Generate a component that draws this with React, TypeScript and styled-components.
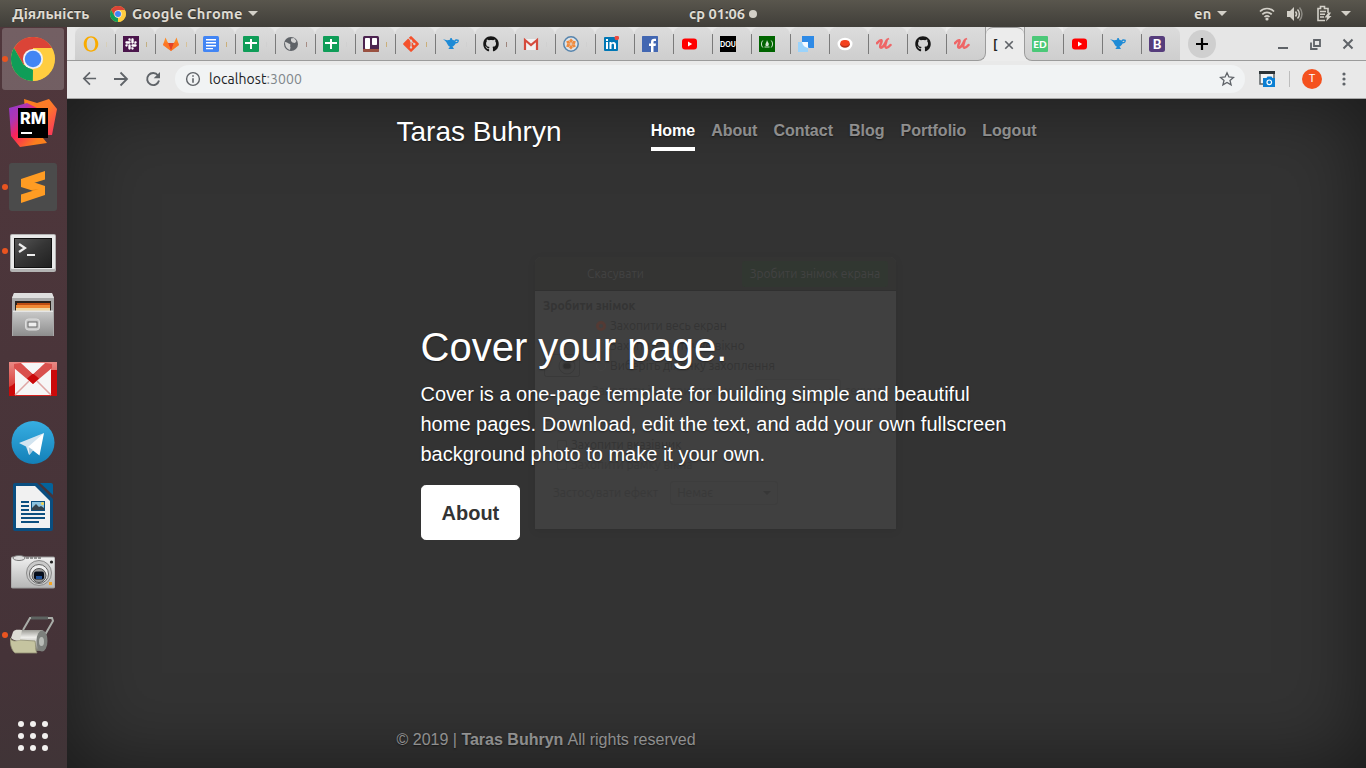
import React from "react";
import styled, { createGlobalStyle } from "styled-components";
import { FaGithub, FaSlack, FaGitAlt } from "react-icons/fa";

const uiFont = `"Ubuntu", "Noto Sans", "Open Sans", sans-serif`;
const pageFont = `"Liberation Sans", Arial, sans-serif`;

const GlobalStyle = createGlobalStyle`
  *, *::before, *::after { box-sizing: border-box; }
  body { margin: 0; overflow: hidden; background: #333; }
  h1, h3, p { margin: 0; }
  svg { display: block; flex: none; }
`;

const Desktop = styled.div`
  width: 1366px;
  height: 768px;
  display: grid;
  grid-template-columns: 67px 1fr;
  grid-template-rows: 27px 1fr;
  overflow: hidden;
`;

/* ---------- top panel ---------- */

const Panel = styled.header`
  grid-column: 1 / 3;
  display: grid;
  grid-template-columns: 689px 505px 1fr;
  background: linear-gradient(#59564d, #403e39);
  color: #dfdbd2;
  font: 700 14.67px/27px ${uiFont};
  text-shadow: 0 -1px 0 rgba(0, 0, 0, 0.45);
`;
const PanelGroup = styled.div<{ $pad?: number }>`
  display: flex;
  align-items: center;
  padding-left: ${(p) => p.$pad ?? 0}px;
`;
const PanelLabel = styled.span<{ $w: number; $ls?: number; $ml?: number }>`
  width: ${(p) => p.$w}px;
  margin-left: ${(p) => p.$ml ?? 0}px;
  letter-spacing: ${(p) => p.$ls ?? 0}px;
  white-space: nowrap;
`;
const Caret = styled.i<{ $ml?: number }>`
  margin-left: ${(p) => p.$ml ?? 0}px;
  border: 5px solid transparent;
  border-top-color: #d3d0c8;
  border-bottom: 0;
`;
const StatusDot = styled.i`
  width: 8px;
  height: 8px;
  margin-left: 4px;
  border-radius: 50%;
  background: #d3d0c8;
`;
const StatusIcon = styled.span<{ $ml: number }>`
  margin-left: ${(p) => p.$ml}px;
`;

/* ---------- dock ---------- */

const Dock = styled.nav`
  display: flex;
  flex-direction: column;
  align-items: center;
  justify-content: space-between;
  padding: 1px 3px 17px 2px;
  background: linear-gradient(#50373c, #4a353a 45%, #453338 85%, #403437);
`;
const DockApps = styled.div`
  display: grid;
  gap: 2px;
`;
const DockItem = styled.div<{ $active?: boolean; $running?: boolean; $drop?: number }>`
  position: relative;
  width: 62px;
  height: 62px;
  display: grid;
  place-items: center;
  padding-top: ${(p) => p.$drop ?? 0}px;
  border-radius: 3px;
  background: ${(p) => (p.$active ? "rgba(255,255,255,.2)" : "transparent")};
  &::before {
    content: "";
    display: ${(p) => (p.$running ? "block" : "none")};
    position: absolute;
    left: 0;
    top: 28px;
    width: 6px;
    height: 6px;
    border-radius: 50%;
    background: #e95420;
  }
`;
const AppGrid = styled.div`
  display: grid;
  grid-template-columns: repeat(3, 6px);
  gap: 6px;
  i {
    width: 6px;
    height: 6px;
    border-radius: 50%;
    background: #f2f0ee;
  }
`;

/* ---------- browser chrome ---------- */

const Browser = styled.main`
  display: grid;
  grid-template-rows: 34px 38px 1fr;
  min-width: 0;
`;
const TabStrip = styled.div`
  display: flex;
  background: linear-gradient(to top, #9b9b9b 1px, #e6e6e6 1px);
`;
const StripLead = styled.div`
  width: 8px;
  height: 33px;
  border-bottom-right-radius: 6px;
  background: #e9e9e9;
`;
const TabBox = styled.div<{ $w: number; $divider?: boolean }>`
  width: ${(p) => p.$w}px;
  height: 33px;
  display: flex;
  align-items: center;
  padding: 1px 0 0 8px;
  gap: 7px;
  border-radius: 8px 8px 0 0;
  background:
    linear-gradient(#7a7a7a, #7a7a7a) left 0 top 7px / ${(p) => (p.$divider ? 1 : 0)}px 20px no-repeat,
    linear-gradient(#dcdcdc, #cecece);
`;
/* The tabs on either side of the active one curve into its foot. */
const FootCorner = styled.div`
  height: 34px;
  background: #ececec;
`;
const TabBeforeActive = styled(TabBox)`
  height: 34px;
  border: solid #9b9b9b;
  border-width: 0 1px 1px 0;
  border-radius: 8px 0 8px 0;
`;
const TabAfterActive = styled(TabBox)`
  height: 34px;
  padding-left: 7px;
  border: solid #9b9b9b;
  border-width: 0 0 1px 1px;
  border-radius: 0 8px 0 8px;
`;
const TitleSliver = styled.i<{ $color: string }>`
  width: 1px;
  height: 5px;
  background: ${(p) => p.$color};
  opacity: 0.5;
`;
const ActiveTab = styled.div`
  width: 38px;
  height: 34px;
  display: flex;
  align-items: center;
  gap: 5px;
  padding-left: 7px;
  border-top: 1px solid #9b9b9b;
  border-radius: 7px 7px 0 0;
  background: #ececec;
  color: #222;
  font: 700 12px/16px ${uiFont};
  span { width: 5px; overflow: hidden; }
`;
const NewTab = styled.button`
  width: 28px;
  height: 28px;
  margin: 3px 0 0 8px;
  padding: 0;
  display: grid;
  place-items: center;
  border: 0;
  border-radius: 50%;
  background: #cfcfcf;
`;
const WindowControls = styled.div`
  display: flex;
  align-items: center;
  gap: 19px;
  margin-left: auto;
  padding: 0 10px 0 0;
`;
const Toolbar = styled.div`
  display: flex;
  align-items: center;
  padding: 0 14px 1px 15px;
  background: #e9e9e9;
  border-bottom: 1px solid #a7a7a7;
`;
const NavButtons = styled.div`
  display: flex;
  gap: 16px;
`;
const Omnibox = styled.div`
  width: 1070px;
  height: 28px;
  display: flex;
  align-items: center;
  margin-left: 14px;
  margin-right: 14px;
  padding: 0 10px;
  border-radius: 14px;
  background: #f1f3f4;
  color: #202124;
  font: 14px/28px ${uiFont};
`;
const Url = styled.span`
  flex: 1;
  margin-left: 8px;
  letter-spacing: 0.06px;
  em { font-style: normal; color: #80868b; }
`;
const ToolbarDivider = styled.i`
  width: 1px;
  height: 16px;
  margin: 0 12px 0 13px;
  background: #bdbdbd;
`;
const Avatar = styled.span`
  width: 20px;
  height: 20px;
  margin-right: 19px;
  border-radius: 50%;
  background: #f4511e;
  color: #fff;
  font: 11px/20px Roboto, sans-serif;
  text-align: center;
`;

/* ---------- page ---------- */

const Page = styled.section`
  position: relative;
  display: flex;
  justify-content: center;
  background: #333;
  box-shadow: inset 0 0 80px rgba(0, 0, 0, 0.5);
  color: #fff;
  font: 16px/1.5 ${pageFont};
  text-shadow: 0 0.8px 1.6px rgba(0, 0, 0, 0.5);
`;
const Cover = styled.div`
  position: relative;
  width: 672px;
  padding: 16px;
  display: flex;
  flex-direction: column;
  justify-content: space-between;
`;
const Masthead = styled.div`
  display: flex;
  justify-content: space-between;
  align-items: flex-start;
`;
const Brand = styled.h3`
  font-size: 28px;
  font-weight: 400;
  line-height: 33.6px;
`;
const SiteNav = styled.nav`
  display: flex;
  gap: 16px;
`;
const SiteLink = styled.a<{ $active?: boolean }>`
  padding: 4px 0;
  font-weight: 700;
  color: ${(p) => (p.$active ? "#fff" : "rgba(255,255,255,.5)")};
  border-bottom: 4px solid ${(p) => (p.$active ? "#fff" : "transparent")};
`;
const Hero = styled.div`
  padding: 0 24px;
  margin-bottom: 17px;
`;
const HeroTitle = styled.h1`
  margin-bottom: 8px;
  font-size: 40px;
  font-weight: 400;
  line-height: 48px;
`;
const Lead = styled.p`
  margin-bottom: 16px;
  font-size: 20px;
  line-height: 30px;
`;
const HeroButton = styled.a`
  display: block;
  width: max-content;
  padding: 12px 20px 11px;
  border: 1px solid #fff;
  border-radius: 4.8px;
  background: #fff;
  color: #333;
  font-size: 20px;
  font-weight: 700;
  line-height: 30px;
  text-shadow: none;
`;
const SiteFooter = styled.footer`
  color: rgba(255, 255, 255, 0.5);
  b { margin-right: 0.6px; }
`;

/* ---------- fading screenshot dialog ---------- */

const Dialog = styled.aside`
  position: absolute;
  left: 468px;
  top: 158px;
  width: 361px;
  height: 272px;
  border-radius: 6px 6px 0 0;
  background: #404040;
  box-shadow: 0 2px 8px rgba(0, 0, 0, 0.08);
  color: #343434;
  font: 12.1px/20px ${uiFont};
  text-shadow: none;
  white-space: nowrap;
`;
const DialogBar = styled.div`
  height: 34px;
  display: grid;
  grid-template-columns: 145px 146px;
  justify-content: space-between;
  align-items: center;
  padding: 0 8px;
  border-bottom: 1px solid #303030;
  border-radius: 6px 6px 0 0;
  background: #343433;
  color: #424242;
  text-align: center;
`;
const DialogButton = styled.span<{ $primary?: boolean }>`
  line-height: 26px;
  border-radius: 3px;
  background: ${(p) => (p.$primary ? "#313731" : "transparent")};
`;
const DialogRow = styled.div<{ $pad: number; $mt?: number; $bold?: boolean; $faint?: boolean }>`
  display: flex;
  align-items: center;
  gap: 4px;
  height: 20px;
  margin-top: ${(p) => p.$mt ?? 0}px;
  padding-left: ${(p) => p.$pad}px;
  font-weight: ${(p) => (p.$bold ? 700 : 400)};
  opacity: ${(p) => (p.$faint ? 0.55 : 1)};
`;
const CameraSlot = styled.span`
  width: 48px;
  margin-left: -52px;
  height: 24px;
`;
const Radio = styled.i<{ $on?: boolean }>`
  width: 10px;
  height: 10px;
  border-radius: 50%;
  border: ${(p) => (p.$on ? "3px solid #533a34" : "1px solid #444")};
`;
const Check = styled.i`
  width: 10px;
  height: 10px;
  border: 1px solid #3b3b3b;
  border-radius: 2px;
`;
const Field = styled.span<{ $w: number; $ml?: number }>`
  width: ${(p) => p.$w}px;
  height: 24px;
  display: flex;
  align-items: center;
  justify-content: space-between;
  margin-left: ${(p) => p.$ml ?? 8}px;
  padding: 0 6px;
  border: 1px solid #3b3b3b;
  border-radius: 3px;
`;
const FieldCaret = styled(Caret)`
  border-width: 4px;
  border-bottom: 0;
  border-top-color: #303030;
`;

/* ---------- icons ---------- */

const ChromeLogo = ({ size }: { size: number }) => (
  <svg width={size} height={size} viewBox="0 0 48 48">
    <circle cx="24" cy="24" r="24" fill="#ffcd40" />
    <path d="M24 24 13.6 30 3.2 12A24 24 0 0 1 44.8 12H24z" fill="#db4437" />
    <path d="M3.2 12 13.6 30l10.4 6-.2 12A24 24 0 0 1 3.2 12z" fill="#0f9d58" />
    <path d="M34.4 30 23.8 48A24 24 0 0 0 44.8 13H24z" fill="#ffcd40" />
    <circle cx="24" cy="24" r="11" fill="#f1f1f1" />
    <circle cx="24" cy="24" r="9" fill="#4285f4" />
  </svg>
);

const Fav = ({ children }: { children: React.ReactNode }) => (
  <svg width="16" height="16" viewBox="0 0 16 16">{children}</svg>
);
const SheetsFav = () => (
  <Fav><rect width="16" height="16" rx="1" fill="#0f9d58" /><path d="M7 3h2v3h5v2H9v5H7V8H2V6h5z" fill="#fff" /></Fav>
);
const LampFav = () => (
  <Fav>
    <path d="M0 3.500c2 0 2.500.8 4.500.7L7 3.700 7.400 2h1.200l.8 1.700 2.100.8c.8-1.600 2.300-1.500 4.300-.8.400 2.400-.9 3.700-3.200 3.700-1 1.800-2 2.700-3.100 3.200L11 13H5.300l1.700-2.300C4 9.700 4.500 5.400 0 3.500z" fill="#1e8bd6" />
    <path d="M12.300 5.800c.5-1 1.300-1.200 2.200-.8 0 .9-.9 1.300-2.200.8z" fill="#d3d3d3" />
  </Fav>
);
const YoutubeFav = () => (
  <Fav><rect x="1" y="2.500" width="15" height="11" rx="3" fill="#f00" /><path d="m7 5.500 4.200 2.500L7 10.500z" fill="#fff" /></Fav>
);
const UdemyFav = () => (
  <Fav>
    <path d="M1 7.200C2.500 5.500 4.200 3.800 5.300 4.200 7 5 3 9.500 4.400 11.300 6.200 13 9 8 10.600 4.500M10.600 4.500C9.500 8 8.500 11 10 11.700s3-1 4.500-2.700" fill="none" stroke="#ee6667" strokeWidth="2.500" strokeLinecap="round" />
    <path d="M10.500 3.800 13 2.500" stroke="#ee6667" strokeWidth="1.600" />
  </Fav>
);
const TextFav = ({ bg, label, size = 10, r = 0, y = 11.5 }: { bg: string; label: string; size?: number; r?: number; y?: number }) => (
  <Fav>
    <rect width="16" height="16" rx={r} fill={bg} />
    <text x="8" y={y} fill="#fff" fontFamily="Lato, sans-serif" fontWeight="900" fontSize={size} textAnchor="middle">{label}</text>
  </Fav>
);

const favicons: { icon: React.ReactNode; w: number; sliver?: string }[] = [
  { w: 40, icon: <Fav><path fillRule="evenodd" d="M8 .3c4.100 0 7.300 3.300 7.300 7.700S12.100 15.700 8 15.700.7 12.400.7 8 3.900.3 8 .3zm0 1.200C5.300 1.500 3.700 4.300 3.700 8s1.600 6.500 4.300 6.500 4.300-2.800 4.300-6.500S10.700 1.500 8 1.500z" fill="#f9ab00" /></Fav>, sliver: "#d8c9a0" },
  { w: 40, icon: <Fav><rect width="16" height="16" fill="#4a154b" /><g transform="translate(1.5 1.500)"><FaSlack size={13} color="#fff" /></g></Fav>, sliver: "#b08a30" },
  { w: 40, icon: <Fav><path d="M8 15 0 9 2.500 1.500 5 7h6l2.500-5.500L16 9z" fill="#fc8a26" /><path d="M8 15 5 7h6z" fill="#e24329" /><path d="M0 9l1-2.500h4L8 15z" fill="#fc6d26" opacity=".7" /><path d="m16 9-1-2.500h-4L8 15z" fill="#fc6d26" opacity=".7" /></Fav>, sliver: "#d8b060" },
  { w: 40, icon: <Fav><rect width="16" height="16" rx="1.500" fill="#4285f4" /><path d="M3 3h10v1.500H3zm0 3h10v1.500H3zm0 3h10v1.500H3zm0 3h7v1.300H3z" fill="#fff" /></Fav>, sliver: "#c08a20" },
  { w: 40, icon: <SheetsFav />, sliver: "#ccc" },
  { w: 40, icon: <Fav><circle cx="8" cy="8" r="7" fill="#5f6368" /><path d="M2 6c2 0 3 1.500 5 2 1 1-.5 2 .5 3.500L7 14C4 13 2 11 2 6zM8 2.500 11 2l2.500 3L12 7 9.500 6.500 8 5z" fill="#d3d3d3" /></Fav>, sliver: "#743" },
  { w: 40, icon: <SheetsFav />, sliver: "#ccc" },
  { w: 40, icon: <Fav><rect width="16" height="16" rx="1.500" fill="#4c2450" /><path d="M0 13h16v1.500a1.500 1.500 0 0 1-1.500 1.500h-13A1.500 1.500 0 0 1 0 14.500z" fill="#9a5140" /><rect x="2" y="2" width="5" height="11" rx=".7" fill="#fff" /><rect x="9" y="2" width="5" height="7" rx=".7" fill="#fff" /></Fav>, sliver: "#c08a20" },
  { w: 40, icon: <FaGitAlt size={18} color="#f4512c" style={{ margin: "0 -1px" }} />, sliver: "#c08a20" },
  { w: 40, icon: <LampFav />, sliver: "#ccc" },
  { w: 40, icon: <FaGithub size={16} color="#161616" />, sliver: "#632" },
  { w: 40, icon: <Fav><path d="M1 3h14v11H1z" fill="#f1f1f1" /><path d="M2 14V4l6 5 6-5v10" fill="none" stroke="#d54b3d" strokeWidth="2.200" /></Fav>, sliver: "#ccc" },
  { w: 40, icon: <Fav><circle cx="8" cy="8" r="7.200" fill="#dfe3e6" stroke="#5684ad" strokeWidth="1.500" />{[0, 60, 120, 180, 240, 300].map((a) => <path key={a} d="M8 7.500 6.200 4.500 8 2.500l2 2.100z" fill="#f08a3c" transform={`rotate(${a} 8 8)`} />)}</Fav>, sliver: "#ccc" },
  { w: 39, icon: <Fav><rect x="1" y="1" width="14" height="14" rx="1" fill="#0077b5" /><path d="M3 6h2v7H3zM3 3h2v2H3zm3.500 3h2v1c1.300-1.700 4.500-1.400 4.500 1.700V13h-2V9c0-1.800-2.500-1.500-2.500 0v4h-2z" fill="#fff" /><circle cx="13.800" cy="2" r="2.300" fill="#ee4b3f" /></Fav> },
  { w: 39, icon: <Fav><rect width="16" height="16" rx=".6" fill="#4267b2" /><path d="M9 16v-6H7V7.500h2V6c0-2.300 1.300-3.300 3.200-3.300H14V5h-1.200C11.700 5 11.500 5.500 11.500 6.300v1.200H14l-.4 2.500h-2.100v6z" fill="#fff" /></Fav> },
  { w: 39, icon: <YoutubeFav /> },
  { w: 39, icon: <TextFav bg="#000" label="DOU" size={6.8} y={10.5} /> },
  { w: 39, icon: <Fav><rect width="16" height="16" fill="#006400" /><path d="M3.800 4.500C2 6 2 10 3.800 11.500M12.200 4.500C14 6 14 10 12.200 11.500" fill="none" stroke="#cfe3cf" /><path d="M8 4c.3 2 2.300 2.800 1.800 5L9 10H7C5.500 8.500 7.500 7 8 4zM5.500 10.500h5v1h-5z" fill="#cfe3cf" /></Fav> },
  { w: 39, icon: <Fav><path d="M4 0h12v12h-5L4 6z" fill="#2e8ae6" /><path d="M0 6h10v10H0z" fill="#9bd3fb" /><path d="M4 6h6v6C7 11.500 4.500 9.500 4 6z" fill="#f4faff" /></Fav> },
  { w: 39, icon: <Fav><ellipse cx="8" cy="8" rx="7.500" ry="6.300" fill="#fff" /><ellipse cx="8" cy="8.200" rx="4.800" ry="3.600" fill="#b9331b" /><ellipse cx="8" cy="7" rx="4.600" ry="3" fill="#f5421f" /></Fav> },
  { w: 39, icon: <UdemyFav /> },
  { w: 39, icon: <FaGithub size={16} color="#161616" /> },
];
const trailing: React.ReactNode[] = [
  <YoutubeFav />,
  <LampFav />,
  <TextFav bg="#563d7c" label="B" size={13} r={2.5} y={12.5} />,
];

const RubyMineIcon = () => (
  <svg width="48" height="48" viewBox="0 0 48 48">
    <defs>
      <linearGradient id="rmA" x1="0" y1="0" x2="1" y2="1"><stop offset="0" stopColor="#9039d0" /><stop offset=".25" stopColor="#b035b0" /><stop offset=".45" stopColor="#fc2358" /><stop offset=".8" stopColor="#fc801d" /></linearGradient>
      <linearGradient id="rmB" x1="0" y1="0" x2="1" y2="1"><stop offset="0" stopColor="#fc801d" /><stop offset=".5" stopColor="#fc7a2a" /><stop offset="1" stopColor="#fb2d62" /></linearGradient>
    </defs>
    <path d="m15 0 13 4 12-4 8 10-5 26H18z" fill="url(#rmB)" />
    <path d="M0 9 18 4l10 5v30l6 0 4 5-27 4L2 37z" fill="url(#rmA)" />
    <rect x="9" y="9" width="30" height="30" />
    <text x="11" y="25" fill="#fff" fontFamily="Inter, sans-serif" fontWeight="800" fontSize="16" textLength="26" lengthAdjust="spacingAndGlyphs">RM</text>
    <path d="M12 33h11v2H12z" fill="#fff" />
  </svg>
);
const SublimeIcon = () => (
  <svg width="48" height="48" viewBox="0 0 48 48">
    <rect width="48" height="48" rx="3" fill="#4b4b4b" />
    <path d="m12 24 24 7.500V23l-12-4-12-2.500z" fill="#ff9c23" />
    <path d="m22 27 14 4.500V28l-6-2z" fill="#e8870f" />
    <path d="M12 16 36 8v8.500L12 24z" fill="#ff9c23" />
    <path d="M12 31.500 36 24v8L12 40z" fill="#ff9c23" />
  </svg>
);
const TerminalIcon = () => (
  <svg width="46" height="38" viewBox="0 0 46 38">
    <defs><linearGradient id="term" x1="0" y1="0" x2="1" y2="1"><stop offset="0" stopColor="#555" /><stop offset=".5" stopColor="#353535" /><stop offset="1" stopColor="#202020" /></linearGradient></defs>
    <rect width="46" height="38" rx="2" fill="#b3b3b3" />
    <rect x="1" y="1" width="44" height="34" rx="1" fill="#e9e9e9" />
    <rect x="4" y="4" width="38" height="30" fill="#111" />
    <rect x="5" y="5" width="36" height="28" fill="url(#term)" />
    <path d="m9 10 6 4-6 4M17 21h8" fill="none" stroke="#eee" strokeWidth="2.200" />
  </svg>
);
const FilesIcon = () => (
  <svg width="44" height="44" viewBox="0 0 44 44">
    <defs><linearGradient id="cab" x1="0" y1="0" x2="0" y2="1"><stop offset="0" stopColor="#cacaca" /><stop offset="1" stopColor="#8d8d8d" /></linearGradient></defs>
    <path d="M3 0h38l2 5v38H1V5z" fill="#a9a9a9" />
    <path d="M3 0h38l2 5H1z" fill="#dedede" />
    <path d="M4 8h36v11H4z" fill="#2b221c" />
    <path d="M6 10h33v2H6z" fill="#bf4e13" />
    <path d="M5 12h34v4H5z" fill="#f08a35" />
    <path d="M5 15h34v4H5z" fill="#efd7a4" />
    <path d="M2 18h40v25H2z" fill="url(#cab)" />
    <path d="M2 17.500h40V19H2z" fill="#e5e5e5" />
    <rect x="14.500" y="26" width="14" height="11" rx="3" fill="#c9c9c9" stroke="#ddd" />
    <rect x="17" y="29" width="9" height="5" fill="#eee" stroke="#666" />
  </svg>
);
const GmailIcon = () => (
  <svg width="48" height="34" viewBox="0 0 48 34">
    <defs><linearGradient id="gm" x1="0" y1="0" x2="0" y2="1"><stop offset="0" stopColor="#e98a85" /><stop offset="1" stopColor="#d4221f" /></linearGradient></defs>
    <rect width="48" height="34" fill="url(#gm)" />
    <path d="M42 8h6v26h-6z" fill="#cb0a0a" />
    <path d="M0 25c2-1 4-2 6-4v13H0z" fill="#cb0a0a" />
    <path d="M6 5h36v28H6z" fill="#f6f6f6" />
    <path d="m6 33 14-14M42 33 28 19" stroke="#dfa6a4" strokeWidth="1.500" />
    <path d="M5 2 12 1l12 11L36 1l7 1v4L24 22 5 6z" fill="#d9504d" />
    <path d="m18 16.500 6-5 6 5-6 5.500z" fill="#cb0a0a" />
    <path d="M12 1h24L24 12z" fill="#f6f6f6" />
  </svg>
);
const TelegramIcon = () => (
  <svg width="44" height="44" viewBox="0 0 44 44">
    <defs><linearGradient id="tg" x1="0" y1="0" x2="0" y2="1"><stop offset="0" stopColor="#37aee2" /><stop offset="1" stopColor="#1380b8" /></linearGradient></defs>
    <circle cx="22" cy="21.500" r="21.500" fill="url(#tg)" />
    <path d="M33 12 8 22l7 3.500 3 8z" fill="#d2e4f0" />
    <path d="M33 12 17 26l1 8 4-4.500 6.500 5z" fill="#fff" />
    <path d="m17.500 26 1 8 3.500-5z" fill="#a9c9dd" />
  </svg>
);
const WriterIcon = () => (
  <svg width="40" height="48" viewBox="0 0 40 48">
    <path d="M2 0h22l16 16v30a2 2 0 0 1-2 2H2a2 2 0 0 1-2-2V2a2 2 0 0 1 2-2z" fill="#0a4e80" />
    <path d="M27 0h11a2 2 0 0 1 2 2v10z" fill="#04639b" />
    <path d="M3 3h19l15 15v27H3z" fill="#f1f1f1" />
    <path d="M8 18h8v2H8zm0 4h8v2H8zm0 4h8v2H8zm0 4h24v2H8zm0 4h24v2H8zm0 4h18v2H8z" fill="#0b4f80" />
    <rect x="18" y="18" width="14" height="10" fill="#0b4f80" />
    <path d="M19 19h12v8H19z" fill="#8bc2de" />
    <path d="m19 27 0-2 4-4 3 3 2-1 3 2v2z" fill="#35424a" />
    <circle cx="29.500" cy="20.500" r="1.500" fill="#f4d34d" />
  </svg>
);
const CameraIcon = () => (
  <svg width="44" height="34" viewBox="0 0 44 34">
    <defs><linearGradient id="cam" x1="0" y1="0" x2="0" y2="1"><stop offset="0" stopColor="#efefef" /><stop offset="1" stopColor="#b6b6b6" /></linearGradient></defs>
    <rect y="2" width="44" height="31" rx="1.500" fill="url(#cam)" stroke="#999" />
    <ellipse cx="8" cy="3" rx="6" ry="2.500" fill="#ddd" stroke="#777" />
    <path d="M15 3h16" stroke="#777" strokeWidth="1.500" strokeDasharray="3 1" />
    <circle cx="28" cy="18" r="12.500" fill="#c9c9c9" stroke="#8a8a8a" />
    <circle cx="28" cy="19" r="9.500" fill="#eee" stroke="#666" />
    <circle cx="28" cy="20.500" r="7" fill="#999" stroke="#555" />
    <rect x="23" y="16.500" width="10" height="8" rx="2" fill="#050c19" />
    <path d="M25 21h6v3h-6z" fill="#1d4f96" />
    <circle cx="40.500" cy="7" r="1.600" fill="#222" />
    <rect x="38" y="27" width="3" height="3" fill="#f5a524" />
  </svg>
);
const ScreenshotIcon = () => (
  <svg width="46" height="40" viewBox="0 0 46 40">
    <defs><linearGradient id="roll" x1="0" y1="0" x2="0" y2="1"><stop offset="0" stopColor="#9b9b95" /><stop offset=".35" stopColor="#eeeeea" /><stop offset="1" stopColor="#74746c" /></linearGradient></defs>
    <path d="M13 15 20 3h22l1 3-11 19" fill="none" stroke="#a9ada8" strokeWidth="2" />
    <path d="M21 3h17" stroke="#5d6360" strokeWidth="3" />
    <path d="M6 15h26c6 2 7 17 0 21H11z" fill="url(#roll)" />
    <ellipse cx="32" cy="26" rx="5.500" ry="10.500" fill="#7d807c" />
    <ellipse cx="31.500" cy="26.500" rx="2.500" ry="4.500" fill="#b9bcb7" />
    <path d="M0 23c2 4 6 3 10 2l15 1c1 4 0 9 2 12H5c-4-3-5-10-5-15z" fill="#c5c4a0" stroke="#8f8e72" strokeWidth=".8" />
    <path d="M3 17c2-3 5-2 9-2l-2 10c-4 1-7 0-9-2z" fill="#dcdcd4" />
  </svg>
);

const dockApps: { icon: React.ReactNode; active?: boolean; running?: boolean; drop?: number }[] = [
  { icon: <ChromeLogo size={44} />, active: true, running: true },
  { icon: <RubyMineIcon /> },
  { icon: <SublimeIcon />, running: true },
  { icon: <TerminalIcon />, running: true, drop: 3 },
  { icon: <FilesIcon /> },
  { icon: <GmailIcon /> },
  { icon: <TelegramIcon /> },
  { icon: <WriterIcon /> },
  { icon: <CameraIcon />, drop: 2 },
  { icon: <ScreenshotIcon />, running: true },
];

const Stroke = ({ d, w = 16, sw = 1.8, c = "#5f6368" }: { d: string; w?: number; sw?: number; c?: string }) => (
  <svg width={w} height={w} viewBox="0 0 16 16" fill="none" stroke={c} strokeWidth={sw}><path d={d} /></svg>
);

const TopPanel = () => (
  <Panel>
    <PanelGroup $pad={12}>
      <PanelLabel $w={98} $ls={0.08}>Діяльність</PanelLabel>
      <ChromeLogo size={16} />
      <PanelLabel $w={111} $ls={0.33} $ml={6}>Google Chrome</PanelLabel>
      <Caret $ml={5} />
    </PanelGroup>
    <PanelGroup>
      <PanelLabel $w={56}>ср 01:06</PanelLabel>
      <StatusDot />
    </PanelGroup>
    <PanelGroup>
      <PanelLabel $w={18} $ls={0.3}>en</PanelLabel>
      <Caret $ml={5} />
      <StatusIcon $ml={32}>
        <svg width="16" height="16" viewBox="0 0 16 16" fill="none" stroke="#d3d0c8" strokeWidth="1.700">
          <path d="M1 5.500C5 1.500 11 1.500 15 5.500M3.300 8.300c2.700-2.600 6.700-2.600 9.400 0M5.500 11c1.500-1.400 3.500-1.400 5 0" />
          <circle cx="8" cy="13" r="1.600" fill="#d3d0c8" stroke="none" />
        </svg>
      </StatusIcon>
      <StatusIcon $ml={12}>
        <svg width="16" height="16" viewBox="0 0 16 16" fill="none" stroke="#d3d0c8" strokeWidth="1.500">
          <path d="M0 5h3l4-4v14l-4-4H0z" fill="#d3d0c8" stroke="none" />
          <path d="M8.500 5.500c1.300 1.500 1.300 3.500 0 5M10.500 3.500c2.500 2.500 2.500 6.500 0 9" />
          <path d="M12.500 1.500c3.300 3.800 3.300 9.200 0 13" stroke="#8d8b84" />
        </svg>
      </StatusIcon>
      <StatusIcon $ml={14}>
        <svg width="15" height="17" viewBox="0 0 15 17" fill="none" stroke="#d3d0c8" strokeWidth="1.600">
          <path d="M8 15.500H1v-12h2.500v-2h4v2H11V8M3 6.500h6M3 9.300h5M3 12h4" />
          <path d="m11.500 7.500-4 5h2.500l-1 4 5.500-5.500h-2.500l2-3.500z" fill="#d3d0c8" stroke="none" />
        </svg>
      </StatusIcon>
      <Caret $ml={9} />
    </PanelGroup>
  </Panel>
);

const GhostDialog = () => (
  <Dialog>
    <DialogBar>
      <DialogButton>Скасувати</DialogButton>
      <DialogButton $primary>Зробити знімок екрана</DialogButton>
    </DialogBar>
    <DialogRow $pad={8} $mt={5} $bold>Зробити знімок</DialogRow>
    <DialogRow $pad={61}><Radio $on />Захопити весь екран</DialogRow>
    <DialogRow $pad={61}><Radio />Захопити поточне вікно</DialogRow>
    <DialogRow $pad={61}>
      <CameraSlot>
        <svg width="36" height="24" viewBox="0 0 36 24" fill="none" stroke="#393939">
          <rect x=".5" y=".5" width="35" height="22" rx="2" />
          <circle cx="23" cy="12" r="8" />
          <rect x="19" y="9" width="8" height="6" rx="2" fill="#2d2d2d" />
        </svg>
      </CameraSlot>
      <Radio />Виберіть ділянку захоплення
    </DialogRow>
    <DialogRow $pad={57} $mt={5} $faint>Захопити із затримкою у<Field $w={86} $ml={20}><span>0</span><span>− +</span></Field>секунд</DialogRow>
    <DialogRow $pad={8} $mt={14} $bold $faint>Ефекти</DialogRow>
    <DialogRow $pad={22}><Check />Захопити вказівник</DialogRow>
    <DialogRow $pad={22} $faint><Check />Захопити рамку вікна</DialogRow>
    <DialogRow $pad={18} $mt={8} $faint>Застосувати ефект<Field $w={108}>Немає<FieldCaret /></Field></DialogRow>
  </Dialog>
);

export default function App() {
  return (
    <Desktop>
      <GlobalStyle />
      <TopPanel />
      <Dock>
        <DockApps>
          {dockApps.map((a, i) => (
            <DockItem key={i} $active={a.active} $running={a.running} $drop={a.drop}>{a.icon}</DockItem>
          ))}
        </DockApps>
        <AppGrid>{Array.from({ length: 9 }, (_, i) => <i key={i} />)}</AppGrid>
      </Dock>
      <Browser>
        <TabStrip>
          <StripLead />
          {favicons.map((t, i) => (
            <TabBox key={i} $w={t.w} $divider={i > 0}>
              {t.icon}
              {t.sliver && <TitleSliver $color={t.sliver} />}
            </TabBox>
          ))}
          <FootCorner><TabBeforeActive $w={40} $divider><UdemyFav /></TabBeforeActive></FootCorner>
          <ActiveTab>
            <span>[</span>
            <Stroke d="m3 3 10 10m0-10L3 13" w={12} sw={2.2} />
          </ActiveTab>
          <FootCorner><TabAfterActive $w={39}><TextFav bg="#4bc878" label="ED" size={10} r={1} /></TabAfterActive></FootCorner>
          {trailing.map((icon, i) => (
            <TabBox key={i} $w={39} $divider>{icon}</TabBox>
          ))}
          <NewTab><Stroke d="M8 2v12M2 8h12" w={16} sw={2.2} c="#000" /></NewTab>
          <WindowControls>
            <Stroke d="M3 12h10" w={16} sw={2} />
            <svg width="11" height="11" viewBox="0 0 11 11" fill="none" stroke="#5f6368" strokeWidth="1.800"><path d="M4 1h6v6H4zM1 3.500V10h6.500" /></svg>
            <Stroke d="m3.500 3.500 9 9m0-9-9 9" w={16} sw={2} />
          </WindowControls>
        </TabStrip>
        <Toolbar>
          <NavButtons>
            <Stroke d="M15 8H2m6.500-6.500L2 8l6.500 6.500" w={15} />
            <Stroke d="M1 8h13M7.500 1.500 14 8l-6.500 6.500" w={16} />
            <svg width="16" height="16" viewBox="0 0 16 16"><path d="M13 4.500A6 6 0 1 0 14 9.500" fill="none" stroke="#5f6368" strokeWidth="1.900" /><path d="M15 1v6.300H8.700z" fill="#5f6368" /></svg>
          </NavButtons>
          <Omnibox>
            <svg width="16" height="16" viewBox="0 0 16 16"><circle cx="8" cy="8" r="6.400" fill="none" stroke="#5f6368" strokeWidth="1.400" /><path d="M7.200 4.200h1.600v1.600H7.200zm0 3h1.600v4.600H7.200z" fill="#5f6368" /></svg>
            <Url>localhost<em>:3000</em></Url>
            <Stroke d="m8 1.800 1.900 4.200 4.600.4-3.500 3 1.100 4.500L8 11.500l-4.100 2.400L5 9.400l-3.500-3L6.100 6z" w={16} sw={1.3} />
          </Omnibox>
          <svg width="17" height="16" viewBox="0 0 17 16">
            <path d="M1 1h14v12H1z" fill="#f4f4f4" stroke="#5d6467" strokeWidth="1.500" />
            <path d="M0 0h16v3H0z" fill="#2d3437" />
            <path d="M4 7h3.500l1-1.500h4l1 1.500H16v9H4z" fill="#0b7fd3" />
            <circle cx="10.300" cy="11.300" r="2.300" fill="none" stroke="#fff" strokeWidth="1.200" />
          </svg>
          <ToolbarDivider />
          <Avatar>T</Avatar>
          <svg width="6" height="14" viewBox="0 0 6 14" fill="#5f6368"><circle cx="3" cy="2" r="1.600" /><circle cx="3" cy="7" r="1.600" /><circle cx="3" cy="12" r="1.600" /></svg>
        </Toolbar>
        <Page>
          <GhostDialog />
          <Cover>
            <Masthead>
              <Brand>Taras Buhryn</Brand>
              <SiteNav>
                {["Home", "About", "Contact", "Blog", "Portfolio", "Logout"].map((l) => (
                  <SiteLink key={l} $active={l === "Home"}>{l}</SiteLink>
                ))}
              </SiteNav>
            </Masthead>
            <Hero>
              <HeroTitle>Cover your page.</HeroTitle>
              <Lead>
                Cover is a one-page template for building simple and beautiful home pages. Download, edit the text, and add
                your own fullscreen background photo to make it your own.
              </Lead>
              <HeroButton>About</HeroButton>
            </Hero>
            <SiteFooter>© 2019 | <b>Taras Buhryn</b> All rights reserved</SiteFooter>
          </Cover>
        </Page>
      </Browser>
    </Desktop>
  );
}
